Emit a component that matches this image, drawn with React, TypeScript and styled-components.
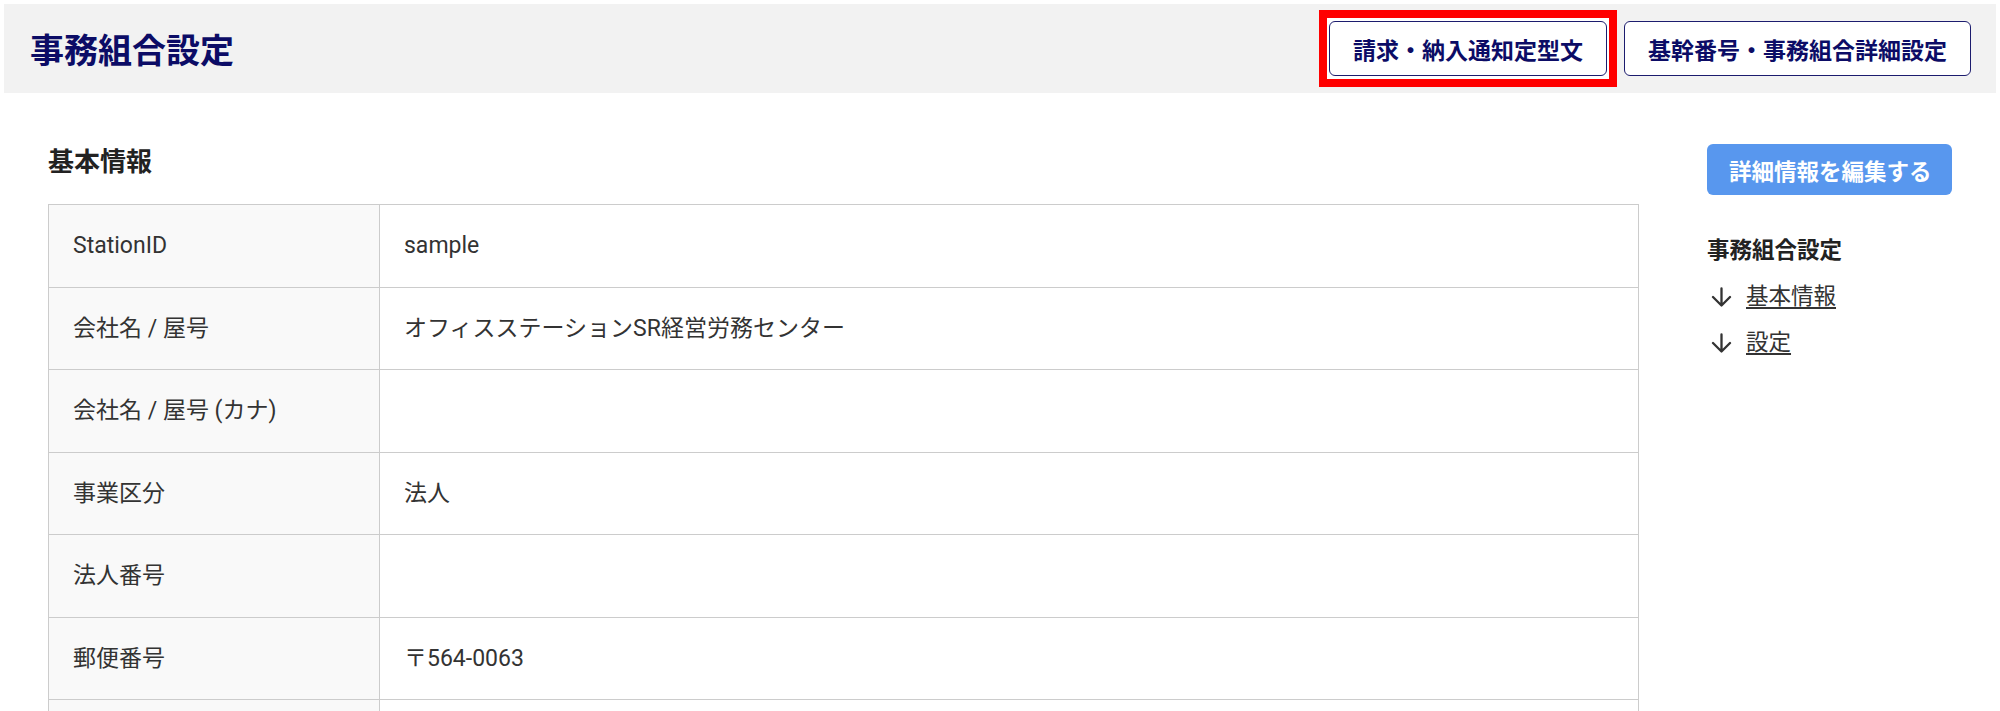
import React from "react";
import styled, { createGlobalStyle } from "styled-components";

const GlobalStyle = createGlobalStyle`
    body {
        margin: 0;
        background: #ffffff;
        font-family: Roboto, "Noto Sans CJK JP", sans-serif;
        color: #333333;
    }
`;

const Page = styled.div`
    padding: 4px 4px 0 4px;
`;

const Header = styled.header`
    display: flex;
    align-items: center;
    justify-content: space-between;
    height: 89px;
    padding: 0 25px 0 26px;
    background: #f2f2f2;
`;

const Title = styled.h1`
    margin: 0;
    font-size: 34px;
    font-weight: 700;
    color: #0c0c66;
`;

const HeaderActions = styled.div`
    display: flex;
    align-items: center;
    gap: 18px;
`;

// red annotation frame drawn around the first button
const Marker = styled.span`
    display: inline-flex;
    margin: -11px;
    padding: 3px 2px;
    background: #ffffff;
    border: 8px solid #ff0000;
`;

const OutlineButton = styled.button`
    height: 55px;
    padding: 0 23px;
    font-family: Roboto, "Noto Sans CJK JP", sans-serif;
    font-size: 23px;
    font-weight: 700;
    color: #0c0c66;
    background: #ffffff;
    border: 1.5px solid #1c1c6e;
    border-radius: 6px;
`;

const Content = styled.div`
    display: flex;
    gap: 68px;
    padding: 51px 44px 0 44px;
`;

const Main = styled.section`
    flex: 1;
`;

const SectionTitle = styled.h2`
    margin: 0 0 24px;
    font-size: 26px;
    line-height: 36px;
    font-weight: 700;
    color: #222222;
`;

const Table = styled.table`
    width: 100%;
    border-collapse: collapse;
    font-size: 23px;
    line-height: 33.5px;
`;

const HeadCell = styled.th`
    width: 282px;
    padding: 24px 24px;
    text-align: left;
    font-weight: 400;
    color: #333333;
    background: #f9f9f9;
    border: 1px solid #cccccc;
`;

const DataCell = styled.td`
    padding: 24px 24px;
    color: #333333;
    border: 1px solid #cccccc;
`;

const Sidebar = styled.aside`
    width: 245px;
    display: flex;
    flex-direction: column;
`;

const EditButton = styled.button`
    height: 51px;
    padding: 0 14px 0 22px;
    font-family: Roboto, "Noto Sans CJK JP", sans-serif;
    font-size: 22.5px;
    font-weight: 700;
    color: #ffffff;
    background: #5897ee;
    border: none;
    border-radius: 6px;
    text-align: left;
`;

const NavTitle = styled.div`
    margin-top: 39px;
    font-size: 22.5px;
    line-height: 33px;
    font-weight: 700;
    color: #222222;
`;

const NavLink = styled.a`
    display: flex;
    align-items: center;
    gap: 14px;
    margin-top: 13px;
    padding-left: 4px;
    font-size: 22.5px;
    line-height: 33px;
    color: #333333;
    text-decoration: underline;
    text-underline-offset: 3px;
`;

const ArrowDown = () => (
    <svg width="21" height="20" viewBox="0 0 21 20" fill="none">
        <path
            d="M10.5 1.5v17M2 10l8.5 8.5L19 10"
            stroke="#333333"
            strokeWidth="2.3"
            strokeLinecap="round"
            strokeLinejoin="round"
        />
    </svg>
);

const rows: { label: string; value: string }[] = [
    { label: "StationID", value: "sample" },
    { label: "会社名 / 屋号", value: "オフィスステーションSR経営労務センター" },
    { label: "会社名 / 屋号 (カナ)", value: "" },
    { label: "事業区分", value: "法人" },
    { label: "法人番号", value: "" },
    { label: "郵便番号", value: "〒564-0063" },
    { label: "", value: "" },
];

const App: React.FC = (): JSX.Element => {
    return (
        <Page>
            <GlobalStyle />
            <Header>
                <Title>事務組合設定</Title>
                <HeaderActions>
                    <Marker>
                        <OutlineButton>請求・納入通知定型文</OutlineButton>
                    </Marker>
                    <OutlineButton>基幹番号・事務組合詳細設定</OutlineButton>
                </HeaderActions>
            </Header>
            <Content>
                <Main>
                    <SectionTitle>基本情報</SectionTitle>
                    <Table>
                        <tbody>
                            {rows.map((row, i) => (
                                <tr key={i}>
                                    <HeadCell>{row.label}</HeadCell>
                                    <DataCell>{row.value}</DataCell>
                                </tr>
                            ))}
                        </tbody>
                    </Table>
                </Main>
                <Sidebar>
                    <EditButton>詳細情報を編集する</EditButton>
                    <NavTitle>事務組合設定</NavTitle>
                    <NavLink href="#basic">
                        <ArrowDown />
                        基本情報
                    </NavLink>
                    <NavLink href="#settings">
                        <ArrowDown />
                        設定
                    </NavLink>
                </Sidebar>
            </Content>
        </Page>
    );
};

export default App;
